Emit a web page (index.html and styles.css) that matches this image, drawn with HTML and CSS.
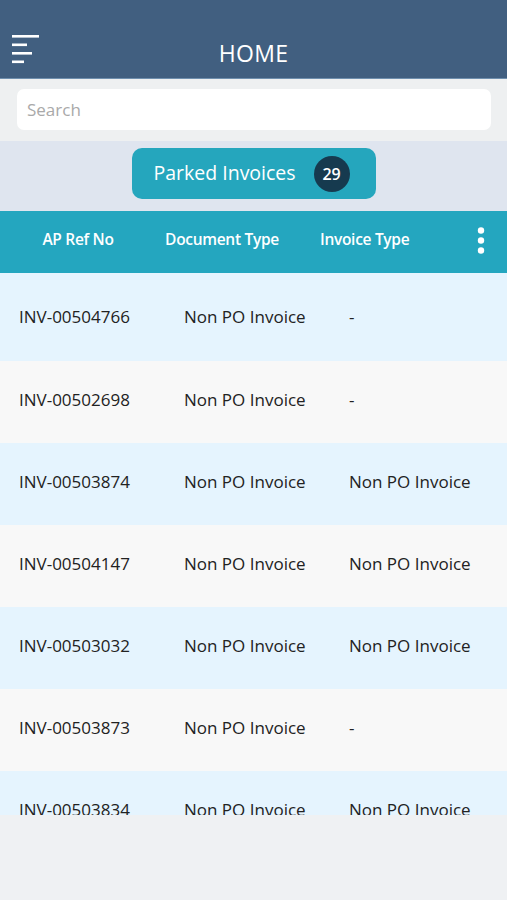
FILE: index.html
```html
<!DOCTYPE html>
<html>
<head>
<meta charset="utf-8">
<link rel="stylesheet" href="styles.css">
</head>
<body>
<div class="app">
  <header class="topbar">
    <svg class="menu" width="30" height="30" viewBox="0 0 30 30">
      <rect x="0" y="0" width="27" height="2.6" fill="#fff"/>
      <rect x="0" y="8.5" width="15" height="2.6" fill="#fff"/>
      <rect x="0" y="17" width="20" height="2.6" fill="#fff"/>
      <rect x="0" y="25.5" width="12" height="2.6" fill="#fff"/>
    </svg>
    <div class="title">HOME</div>
  </header>
  <div class="search-wrap">
    <div class="search">Search</div>
  </div>
  <div class="band">
    <div class="pill">Parked Invoices <span class="badge">29</span></div>
  </div>
  <div class="thead">
    <div class="th c1">AP Ref No</div>
    <div class="th c2">Document Type</div>
    <div class="th c3">Invoice Type</div>
    <svg class="dots" width="10" height="30" viewBox="0 0 10 30">
      <circle cx="5" cy="4.5" r="3.2" fill="#fff"/>
      <circle cx="5" cy="14.5" r="3.2" fill="#fff"/>
      <circle cx="5" cy="24.5" r="3.2" fill="#fff"/>
    </svg>
  </div>
  <div class="list">
    <div class="row odd first"><span class="td">INV-00504766</span><span class="td">Non PO Invoice</span><span class="td">-</span></div>
    <div class="row even"><span class="td">INV-00502698</span><span class="td">Non PO Invoice</span><span class="td">-</span></div>
    <div class="row odd"><span class="td">INV-00503874</span><span class="td">Non PO Invoice</span><span class="td">Non PO Invoice</span></div>
    <div class="row even"><span class="td">INV-00504147</span><span class="td">Non PO Invoice</span><span class="td">Non PO Invoice</span></div>
    <div class="row odd"><span class="td">INV-00503032</span><span class="td">Non PO Invoice</span><span class="td">Non PO Invoice</span></div>
    <div class="row even"><span class="td">INV-00503873</span><span class="td">Non PO Invoice</span><span class="td">-</span></div>
    <div class="row odd"><span class="td">INV-00503834</span><span class="td">Non PO Invoice</span><span class="td">Non PO Invoice</span></div>
  </div>
</div>
</body>
</html>
```
FILE: styles.css
```css
* { box-sizing: border-box; }
html, body { margin: 0; padding: 0; }
body {
  width: 507px;
  height: 900px;
  background: #eff1f3;
  font-family: "Open Sans", "Noto Sans", sans-serif;
  overflow: hidden;
}
.app { display: flex; flex-direction: column; }
.topbar {
  height: 79px;
  background: #415f80;
  border-bottom: 1px solid #6f8fae;
  position: relative;
  display: flex;
  align-items: flex-end;
  justify-content: center;
  padding-bottom: 10px;
}
.menu { position: absolute; left: 12px; top: 35px; }
.title {
  color: #fff;
  font-size: 23px;
  line-height: 30px;
  letter-spacing: 0.3px;
}
.search-wrap {
  height: 62px;
  background: #eef0f1;
  padding: 10px 16px 0 17px;
}
.search {
  height: 41px;
  background: #fff;
  border-radius: 7px;
  color: #a9a9a9;
  font-size: 17px;
  line-height: 41px;
  padding-left: 10px;
}
.band {
  height: 70px;
  background: #dfe5ef;
  display: flex;
  justify-content: center;
  padding-top: 7px;
}
.pill {
  width: 244px;
  height: 51px;
  background: #25a6bd;
  border-radius: 10px;
  color: #fff;
  font-size: 19.5px;
  display: flex;
  align-items: center;
  padding-left: 22px;
  padding-bottom: 3px;
  gap: 18px;
}
.badge {
  width: 36px;
  height: 36px;
  margin-top: 3px;
  border-radius: 50%;
  background: #163a4f;
  color: #fff;
  font-size: 16px;
  font-weight: 600;
  display: flex;
  align-items: center;
  justify-content: center;
}
.thead {
  height: 62px;
  background: #24a6bf;
  display: flex;
  align-items: center;
  padding-bottom: 6px;
  position: relative;
  color: #fff;
  font-size: 15.5px;
  font-weight: 600;
}
.th { letter-spacing: -0.3px; white-space: nowrap; }
.c1 { width: 156px; text-align: center; }
.c2 { width: 132px; text-align: center; }
.c3 { width: 172px; padding-left: 32px; }
.dots { position: absolute; left: 476px; top: 15px; }
.list { display: flex; flex-direction: column; height: 542px; overflow: hidden; }
.row {
  height: 82px;
  flex: none;
  display: flex;
  align-items: center;
  padding-left: 19px;
  padding-bottom: 6px;
  color: #222;
  font-size: 17px;
}
.row.first { height: 88px; padding-bottom: 2px; }
.odd { background: #e5f4fe; }
.even { background: #f8f8f8; }
.td:nth-child(1) { width: 165px; }
.td:nth-child(2) { width: 165px; }
```
